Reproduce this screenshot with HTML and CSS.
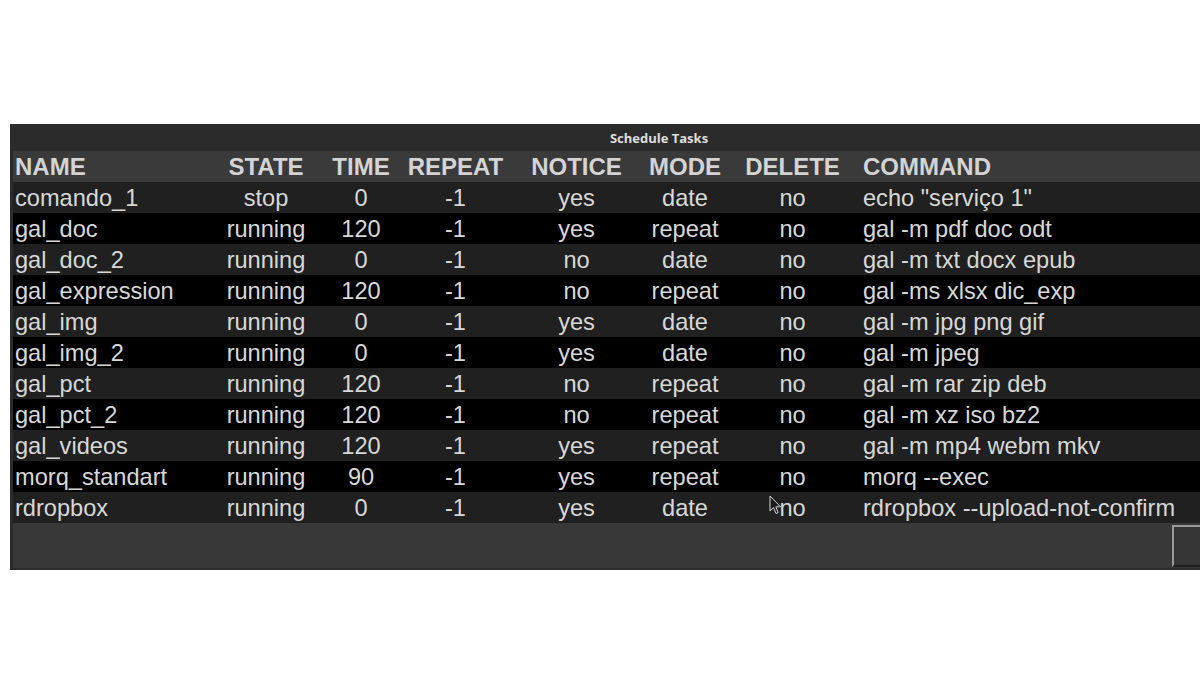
FILE: index.html
```html
<!DOCTYPE html>
<html>
<head>
<meta charset="utf-8">
<link rel="stylesheet" href="styles.css">
</head>
<body>
<div class="window">
  <div class="titlebar"><span class="title">Schedule Tasks</span></div>
  <div class="content">
    <div class="table">
      <div class="row head">
        <div class="c name">NAME</div><div class="c state">STATE</div><div class="c time">TIME</div><div class="c repeat">REPEAT</div><div class="c notice">NOTICE</div><div class="c mode">MODE</div><div class="c del">DELETE</div><div class="c cmd">COMMAND</div>
      </div>
      <div class="row odd"><div class="c name">comando_1</div><div class="c state">stop</div><div class="c time">0</div><div class="c repeat">-1</div><div class="c notice">yes</div><div class="c mode">date</div><div class="c del">no</div><div class="c cmd">echo "serviço 1"</div></div>
      <div class="row even"><div class="c name">gal_doc</div><div class="c state">running</div><div class="c time">120</div><div class="c repeat">-1</div><div class="c notice">yes</div><div class="c mode">repeat</div><div class="c del">no</div><div class="c cmd">gal -m pdf doc odt</div></div>
      <div class="row odd"><div class="c name">gal_doc_2</div><div class="c state">running</div><div class="c time">0</div><div class="c repeat">-1</div><div class="c notice">no</div><div class="c mode">date</div><div class="c del">no</div><div class="c cmd">gal -m txt docx epub</div></div>
      <div class="row even"><div class="c name">gal_expression</div><div class="c state">running</div><div class="c time">120</div><div class="c repeat">-1</div><div class="c notice">no</div><div class="c mode">repeat</div><div class="c del">no</div><div class="c cmd">gal -ms xlsx dic_exp</div></div>
      <div class="row odd"><div class="c name">gal_img</div><div class="c state">running</div><div class="c time">0</div><div class="c repeat">-1</div><div class="c notice">yes</div><div class="c mode">date</div><div class="c del">no</div><div class="c cmd">gal -m jpg png gif</div></div>
      <div class="row even"><div class="c name">gal_img_2</div><div class="c state">running</div><div class="c time">0</div><div class="c repeat">-1</div><div class="c notice">yes</div><div class="c mode">date</div><div class="c del">no</div><div class="c cmd">gal -m jpeg</div></div>
      <div class="row odd"><div class="c name">gal_pct</div><div class="c state">running</div><div class="c time">120</div><div class="c repeat">-1</div><div class="c notice">no</div><div class="c mode">repeat</div><div class="c del">no</div><div class="c cmd">gal -m rar zip deb</div></div>
      <div class="row even"><div class="c name">gal_pct_2</div><div class="c state">running</div><div class="c time">120</div><div class="c repeat">-1</div><div class="c notice">no</div><div class="c mode">repeat</div><div class="c del">no</div><div class="c cmd">gal -m xz iso bz2</div></div>
      <div class="row odd"><div class="c name">gal_videos</div><div class="c state">running</div><div class="c time">120</div><div class="c repeat">-1</div><div class="c notice">yes</div><div class="c mode">repeat</div><div class="c del">no</div><div class="c cmd">gal -m mp4 webm mkv</div></div>
      <div class="row even"><div class="c name">morq_standart</div><div class="c state">running</div><div class="c time">90</div><div class="c repeat">-1</div><div class="c notice">yes</div><div class="c mode">repeat</div><div class="c del">no</div><div class="c cmd">morq --exec</div></div>
      <div class="row odd"><div class="c name">rdropbox</div><div class="c state">running</div><div class="c time">0</div><div class="c repeat">-1</div><div class="c notice">yes</div><div class="c mode">date</div><div class="c del cursor-host">no<svg class="cursor" width="13" height="20" viewBox="0 0 13 20"><path d="M1 1 L1 16 L4.5 12.5 L7 18.5 L9.2 17.5 L6.8 11.8 L11.5 11.8 Z" fill="#1a1a1a" stroke="#d8d8d8" stroke-width="1"/></svg></div><div class="c cmd">rdropbox --upload-not-confirm</div></div>
    </div>
    <div class="footer">
      <div class="button"></div>
    </div>
  </div>
</div>
</body>
</html>
```

FILE: styles.css
```css
html, body {
  margin: 0;
  padding: 0;
  background: #ffffff;
}
body {
  font-family: "Liberation Sans", Arial, sans-serif;
}
.window {
  margin-top: 124px;
  margin-left: 10px;
  width: 1298px;
  background: #2b2b2b;
  display: flex;
  flex-direction: column;
}
.titlebar {
  height: 27px;
  display: flex;
  align-items: center;
  justify-content: center;
  background: #2b2b2b;
}
.title {
  font-family: "Open Sans", "Noto Sans", sans-serif;
  font-weight: 700;
  font-size: 13px;
  color: #dedede;
  padding-top: 1px;
}
.content {
  padding: 0 0 2px 3px;
  display: flex;
  flex-direction: column;
}
.table {
  display: flex;
  flex-direction: column;
}
.row {
  display: grid;
  grid-template-columns: 203px 100px 90px 99px 143px 74px 141px 1fr;
  height: 31px;
  box-sizing: border-box;
  padding-top: 2px;
  line-height: 29px;
  font-size: 23.6px;
  color: #d8d8d8;
  white-space: nowrap;
}
.row.head {
  background: #3a3a3a;
  font-weight: 700;
  font-size: 24px;
  padding-top: 0;
  line-height: 31px;
  color: #d4d4d4;
}
.row.odd { background: #202020; }
.row.even { background: #000000; }
.c { text-align: center; }
.c.name { text-align: left; padding-left: 2px; }
.c.cmd { text-align: left; padding-left: 0; }
.cursor-host { position: relative; }
.cursor {
  position: absolute;
  left: 47px;
  top: 1px;
}
.footer {
  height: 45px;
  background: #383838;
  display: flex;
  justify-content: flex-end;
  align-items: center;
}
.button {
  width: 120px;
  height: 42px;
  margin-right: 16px;
  background: #363636;
  border: 2px solid #9a9a9a;
  border-bottom-color: #1e1e1e;
  box-sizing: border-box;
}
```
